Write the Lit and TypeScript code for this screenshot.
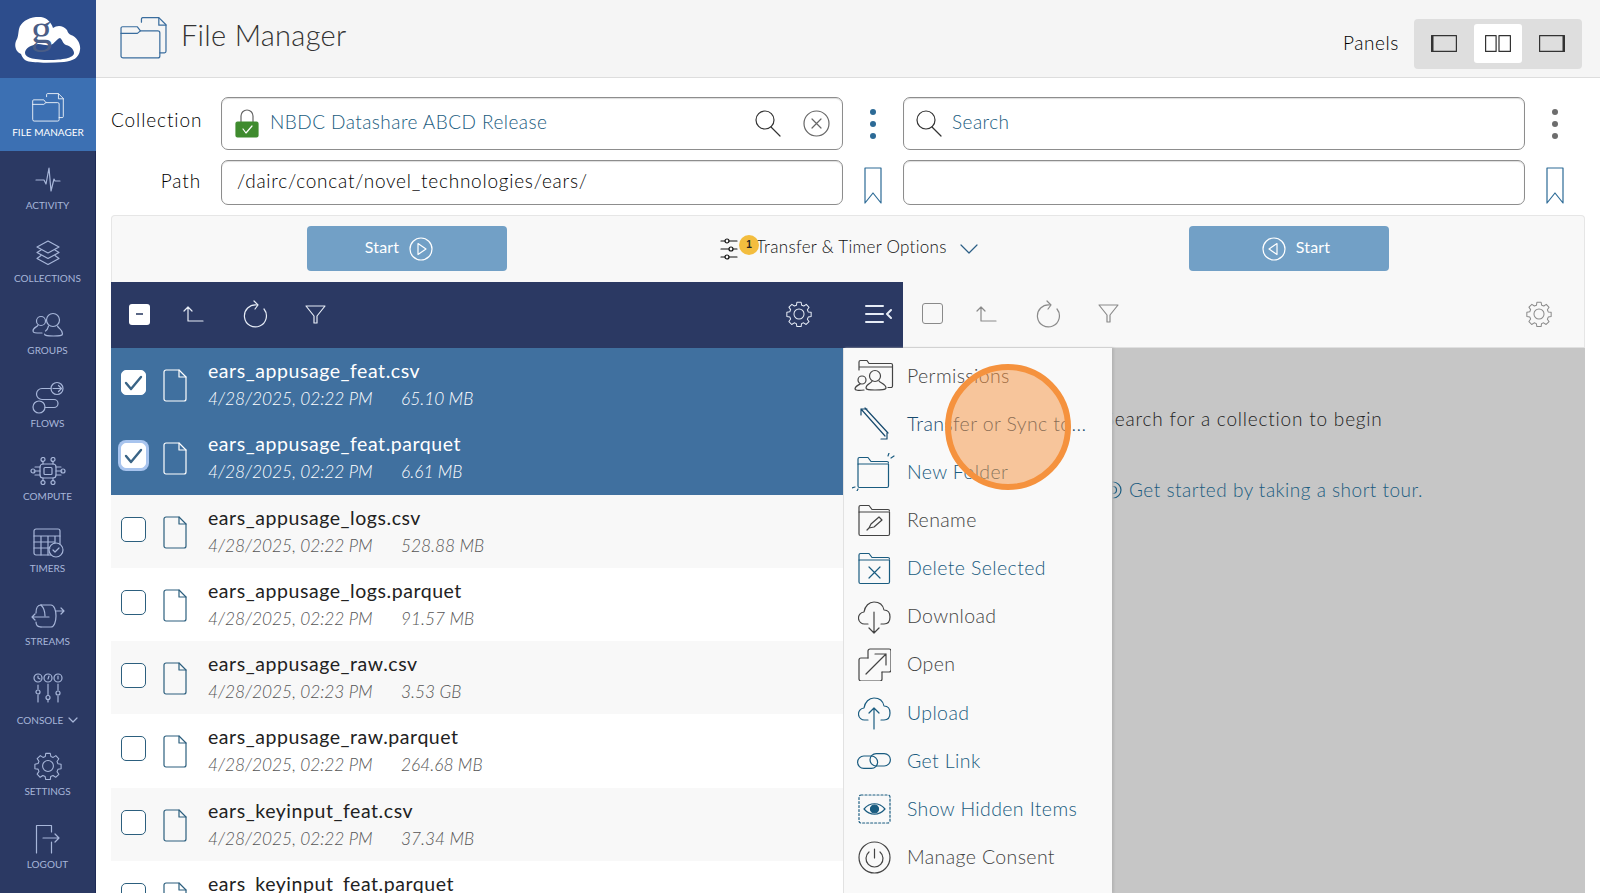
import { LitElement, html, css, svg } from "lit";
import { customElement } from "lit/decorators.js";

const ic = (w: number, h: number, cls: string, body: unknown, vb?: string) =>
  html`<svg class="i ${cls}" width=${w} height=${h} viewBox=${vb ?? `0 0 ${w} ${h}`} fill="none" stroke="currentColor" stroke-width="1.2" stroke-linecap="round" stroke-linejoin="round">${body}</svg>`;

const folderDoc = svg`<path d="M21 5V2a1.500 1.500 0 0 1 1.500-1.500H38l7 7v26a1.500 1.500 0 0 1-1.500 1.500H39"/><path d="M38 1v7h7"/><path d="M1 16V11a1.500 1.500 0 0 1 1.500-1.500H17l3 4h17a2 2 0 0 1 2 2V38a2 2 0 0 1-2 2H3a2 2 0 0 1-2-2z"/><path d="M1 16h16l3-2.500"/>`;
const gearPath = svg`<circle cx="14" cy="15.500" r="6"/><path d="M11.500 1.500h5l.7 3.500 2.500 1 3-2 3.300 3.500-2 3 1 2.500 3.500.5v5l-3.500.7-1 2.500 2 3-3.500 3.300-3-2-2.500 1-.5 3.500h-5l-.7-3.500-2.500-1-3 2-3.300-3.500 2-3-1-2.500-3.500-.5v-5l3.500-.7 1-2.500-2-3 3.500-3.300 3 2 2.500-1z"/>`;

const navIcons: Record<string, unknown> = {
  files: ic(32, 29, "", folderDoc, "0 0 46 41"),
  activity: ic(26, 26, "", svg`<path d="M1 13h8l2 4 3-16 2 23 3-12 1 2h5"/>`),
  collections: ic(26, 26, "", svg`<path d="M13 1l11 6-11 6L2 7z"/><path d="M6 10l-4 2.500 11 6 11-6-4-2.500"/><path d="M6 15.500l-4 3 11 6 11-6-4-3"/>`),
  groups: ic(32, 26, "", svg`<circle cx="21" cy="8" r="6.500"/><path d="M16.500 14c-1 2 0 3-3 5M25.500 14c1 3 5 3 5 8 0 2-3 2-9 2s-9 0-9-2"/><circle cx="9" cy="9" r="4.500"/><path d="M6 13c0 2-5 2-5 6 0 2 2 2 9 2"/>`),
  flows: ic(32, 34, "", svg`<circle cx="25" cy="7.500" r="6"/><path d="M21 7.500h8M26.500 4.500l3 3-3 3"/><path d="M19 7.500h-9a5 5 0 0 0 0 11h12a4 4 0 0 1 0 8h-9"/><circle cx="7" cy="26" r="6"/>`),
  compute: ic(36, 28, "", svg`<rect x="10" y="7" width="16" height="14" rx="3"/><rect x="14" y="10.500" width="8" height="7" rx="1"/><path d="M10 10H5M10 14H4M10 18H5M26 10h5M26 14h6M26 18h5M13 7V4M23 7V4M13 21v3M23 21v3"/><circle cx="13" cy="2.500" r="2"/><circle cx="23" cy="2.500" r="2"/><circle cx="13" cy="25.500" r="2"/><circle cx="23" cy="25.500" r="2"/><circle cx="3" cy="14" r="2"/><circle cx="33" cy="14" r="2"/>`),
  timers: ic(32, 30, "", svg`<path d="M19 27H4a2 2 0 0 1-2-2V3a2 2 0 0 1 2-2h22a2 2 0 0 1 2 2v13"/><path d="M2 8h26M2 14h20M2 20h16M9 8v19M16 8v19M23 8v7"/><circle cx="24" cy="22" r="7"/><path d="M21 22l2 2 4-4"/>`),
  streams: ic(34, 26, "", svg`<path d="M10 2h10c3 0 5 5 5 11s-2 11-5 11H10"/><path d="M10 2c-3 0-5 3-5 8M10 24c-3 0-5-2-5-5"/><path d="M10 2c2 2 4 6 4 11"/><path d="M25 8h8M30 5l3 3-3 3M18 14H1M4 11l-3 3 3 3"/>`),
  console: ic(32, 30, "", svg`<circle cx="6" cy="5" r="4"/><circle cx="16" cy="5" r="4"/><circle cx="26" cy="5" r="4"/><path d="M6 3v2l2 1M16 6l1-3M26 3v3"/><path d="M6 12v4M6 22v7M16 11v11M16 27v2M26 11v6M26 23v6"/><circle cx="6" cy="19" r="2"/><circle cx="16" cy="24.500" r="2"/><circle cx="26" cy="20" r="2"/>`),
  settings: ic(28, 28, "", gearPath, "0 0 28 31"),
  logout: ic(26, 30, "", svg`<path d="M1.500 29V1.500h15V8M16.500 18v11"/><path d="M8 14h16M20 10l4 4-4 4"/>`),
};

const gear = () => ic(26, 26, "", gearPath, "0 0 28 31");
const upIcon = ic(22, 18, "", svg`<path d="M6 16V2M2 6l4-4 4 4M6 16h15"/>`);
const refresh = ic(25, 28, "", svg`<path d="M14 5A11 11 0 1 0 21 9"/><path d="M11 1l4 4-3 4"/>`);
const filter = ic(21, 19, "", svg`<path d="M1 1h19l-8 10v7h-3v-7z"/>`);
const search = ic(27, 27, "", svg`<circle cx="11" cy="10" r="9"/><path d="M17 17l9 9"/>`);
const bookmark = ic(18, 37, "", svg`<path d="M1 1h16v35l-8-10-8 10z"/>`);
const kebab = html`<div class="kebab"><span></span><span></span><span></span></div>`;
const fileIcon = ic(24, 33, "", svg`<path d="M3 1h13l7 7v22a2 2 0 0 1-2 2H3a2 2 0 0 1-2-2V3a2 2 0 0 1 2-2z"/><path d="M16 1v7h7"/>`);

const files = [
  ["ears_appusage_feat.csv", "4/28/2025, 02:22 PM", "65.10 MB", "sel"],
  ["ears_appusage_feat.parquet", "4/28/2025, 02:22 PM", "6.61 MB", "sel focus"],
  ["ears_appusage_logs.csv", "4/28/2025, 02:22 PM", "528.88 MB", "alt"],
  ["ears_appusage_logs.parquet", "4/28/2025, 02:22 PM", "91.57 MB", ""],
  ["ears_appusage_raw.csv", "4/28/2025, 02:23 PM", "3.53 GB", "alt"],
  ["ears_appusage_raw.parquet", "4/28/2025, 02:22 PM", "264.68 MB", ""],
  ["ears_keyinput_feat.csv", "4/28/2025, 02:22 PM", "37.34 MB", "alt"],
  ["ears_keyinput_feat.parquet", "", "", ""],
];

const folder = svg`<path d="M1 8V3a1.500 1.500 0 0 1 1.500-1.500H11l3 4h16a1.500 1.500 0 0 1 1.500 1.500"/><path d="M1 8h30.500v22a1.500 1.500 0 0 1-1.500 1.500H2.500A1.500 1.500 0 0 1 1 30z"/>`;
const menuIcons: unknown[] = [
  ic(42, 36, "", svg`<path d="M6 12V4a1.500 1.500 0 0 1 1.500-1.500H14l2 3h22a1.500 1.500 0 0 1 1.500 1.500v21a1.500 1.500 0 0 1-1.500 1.500h-3M6 9h33"/><circle cx="22" cy="18" r="5.500"/><path d="M19 23c0 2-6 3-6 7 0 2 3 2 9 2s11 0 11-2c0-4-6-5-7-7"/><circle cx="9" cy="22" r="4"/><path d="M7 26c-1 1-5 2-5 5 0 1 3 2 9 1"/>`),
  ic(30, 34, "", svg`<path d="M2 2l24 27M2 2v6M2 2h6M28 32v-6M28 32h-6"/><path d="M6 1l23 25"/>`),
  ic(44, 38, "", svg`<g transform="translate(5 3)">${folder}</g><path d="M36 3l1-3M39 5l3-2M3 34l-3 1M6 36l-1 2"/>`),
  ic(33, 33, "", svg`${folder}<path d="M11 24l2-4 8-7 3 3-8 7zM9 26l2-2"/>`),
  ic(33, 33, "", svg`${folder}<path d="M11 15l11 11M22 15L11 26"/>`),
  ic(33, 34, "", svg`<path d="M10 24H7a6 6 0 0 1-1-12c1-6 5-10 10-10 5 0 9 3 10 8 4 0 6 3 6 7s-2 7-6 7h-3M16 12v21M11 28l5 5 5-5"/>`),
  ic(33, 33, "", svg`<path d="M10 10V3a2 2 0 0 1 2-2h19a2 2 0 0 1 2 2v19a2 2 0 0 1-2 2h-7"/><path d="M24 24v7a2 2 0 0 1-2 2H3a2 2 0 0 1-2-2V12a2 2 0 0 1 2-2h7M8 26L28 6M17 6h11v11"/>`),
  ic(33, 34, "", svg`<path d="M10 24H7a6 6 0 0 1-1-12c1-6 5-10 10-10 5 0 9 3 10 8 4 0 6 3 6 7s-2 7-6 7h-3M16 33V12M11 17l5-5 5 5"/>`),
  ic(34, 16, "", svg`<rect x=".6" y="3" width="20" height="12.400" rx="6.200"/><rect x="13" y=".6" width="20.400" height="12.400" rx="6.200"/>`),
  ic(33, 30, "", svg`<rect x="1" y="1" width="31" height="28" rx="2" stroke-dasharray="2 2"/><path d="M6 15c6-7 15-7 21 0-6 7-15 7-21 0z"/><circle cx="16.500" cy="15" r="4" fill="currentColor"/>`),
  ic(33, 33, "", svg`<circle cx="16.500" cy="16.500" r="15.500"/><path d="M16.500 8v9M11 11a8.500 8.500 0 1 0 11 0"/>`),
];
const menu: [string, string][] = [
  ["Permissions", "off"], ["Transfer or Sync to...", "dark"], ["New Folder", "on"], ["Rename", "off"],
  ["Delete Selected", "on"], ["Download", "off"], ["Open", "off"], ["Upload", "on"],
  ["Get Link", "on"], ["Show Hidden Items", "on"], ["Manage Consent", "off"],
];
const nav: [string, string, string][] = [
  ["files", "File Manager", "active"], ["activity", "Activity", ""], ["collections", "Collections", ""],
  ["groups", "Groups", ""], ["flows", "Flows", ""], ["compute", "Compute", ""], ["timers", "Timers", ""],
  ["streams", "Streams", ""], ["console", "Console", "tall"], ["settings", "Settings", ""], ["logout", "Logout", ""],
];

@customElement("app-root")
export class AppRoot extends LitElement {
  static styles = css`
    :host { display: block; height: 893px; overflow: hidden; font-family: Lato, "Open Sans", sans-serif; color: #222; position: relative; background: #fff; }
    * { box-sizing: border-box; }
    .i { display: block; flex: none; }
    .app { display: flex; height: 893px; }
    .side { width: 96px; flex: none; background: #2b3963; color: #a7b6d9; border-right: 1px solid #1d2a55; }
    .logo { height: 78px; background: #2d4d8c; margin-right: -1px; display: flex; align-items: center; justify-content: center; }
    .logo-wrap { position: relative; width: 66px; height: 46px; margin-top: 2px; }
    .logo-g { position: absolute; left: 16px; top: -10px; font: 400 42px/44px "Liberation Serif", serif; color: #4a5d86; }
    .nav { height: 72.7px; display: flex; flex-direction: column; align-items: center; padding-top: 11px; }
    .nav .ico { height: 36px; display: flex; align-items: center; justify-content: center; }
    .nav .lbl { font-size: 10px; line-height: 12px; margin-top: 1px; text-transform: uppercase; white-space: nowrap; display: flex; align-items: center; gap: 5px; }
    .nav.active { background: #3c70b3; color: #fff; height: 73px; margin-right: -1px; }
    .nav.tall { height: 77px; padding-top: 10px; }
    .nav.tall .lbl { margin-top: 8px; }
    main { flex: 1; min-width: 0; display: flex; flex-direction: column; }
    header { height: 78px; background: #f5f5f5; border-bottom: 1px solid #ddd; display: flex; align-items: center; padding: 0 18px 0 24px; color: #3a6d9e; flex: none; }
    header > .i { margin-bottom: 1px; }
    h1 { font-weight: 300; font-size: 29px; letter-spacing: .3px; color: #333; margin: 0 0 8px 14px; }
    .panels { margin: 8px 15px 0 auto; color: #000; font-size: 19px; font-weight: 300; letter-spacing: .6px; }
    .pgroup { width: 168px; height: 50px; margin-top: 10px; background: #dedede; border-radius: 4px; display: flex; align-items: center; justify-content: center; gap: 6px; color: #333; }
    .pbtn { width: 48px; height: 39px; display: flex; align-items: center; justify-content: center; border-radius: 3px; }
    .pbtn.on { background: #fff; }
    .top { padding: 19px 15px 10px; display: grid; grid-template-columns: 110px 622px 60px 622px 60px; row-gap: 10px; flex: none; }
    .flabel { text-align: right; padding-right: 20px; font-size: 19px; letter-spacing: .9px; color: #000; font-weight: 300; white-space: nowrap; }
    .flabel.c { padding-top: 11px; } .flabel.p { padding-top: 9px; }
    .box { border: 1px solid #8d8d8d; border-radius: 7px; background: #fff; display: flex; align-items: center; font-size: 19px; font-weight: 300; box-shadow: inset 0 1px 1px #ddd; }
    .box.c { height: 53px; padding: 0 12px 0 13px; gap: 11px; color: #1a5c80; letter-spacing: .45px; }
    .box.s { padding-left: 11px; gap: 10px; }
    .box.p { height: 45px; padding: 0 15px 4px; color: #000; letter-spacing: .76px; }
    .box .tx { padding-bottom: 5px; }
    .box .sp { flex: 1; }
    .sico { color: #333; } .xico { color: #666; margin-left: 11px; }
    .slot { display: flex; justify-content: center; color: #2c6a96; }
    .slot.g { color: #6d6d6d; }
    .slot.k { padding-top: 12px; } .slot.b { padding-top: 7px; }
    .kebab { display: flex; flex-direction: column; gap: 6px; }
    .kebab span { width: 6px; height: 6px; border-radius: 50%; background: currentColor; }
    .opts { margin: 0 15px; height: 67px; flex: none; background: #f8f8f8; border: 1px solid #e6e6e6; border-bottom: none; border-radius: 4px 4px 0 0; display: flex; align-items: flex-start; padding: 10px 0 0 195px; }
    .start { width: 200px; height: 45px; background: #72a0c6; border-radius: 4px; color: #fff; display: flex; align-items: center; justify-content: center; gap: 10px; font-size: 16px; flex: none; }
    .start .tx { padding-bottom: 4px; letter-spacing: .2px; }
    .start.a { padding-right: 16px; } .start.b { padding-left: 14px; }
    .opt { position: relative; width: 682px; height: 45px; display: flex; align-items: center; padding-left: 213px; font-size: 17px; font-weight: 300; color: #111; }
    .opt .t { margin: 0 0 4px 18px; letter-spacing: .3px; }
    .opt .chev { margin-left: 13px; color: #2c5f86; }
    .badge { position: absolute; left: 232px; top: 9px; width: 20px; height: 20px; border-radius: 50%; background: #f3bd3e; font: bold 10px/19px "Liberation Sans", sans-serif; text-align: center; color: #222; }
    .tools { margin: 0 15px; height: 66px; flex: none; display: flex; }
    .bar { display: flex; align-items: center; padding-bottom: 2px; }
    .bar.l { width: 792px; background: #2b3963; color: #e6ecf6; padding-left: 18px; padding-right: 11px; }
    .bar.r { flex: 1; background: #f8f8f8; color: #8a8a8a; padding-left: 19px; padding-right: 32px; border-right: 1px solid #e6e6e6; border-bottom: 1px solid #e0e0e0; }
    .bar .cb { width: 21px; height: 21px; border-radius: 3px; display: flex; align-items: center; justify-content: center; }
    .bar.l .cb { background: #fff; }
    .bar.l .cb::after { content: ""; width: 7px; height: 1.500px; background: #5a6785; }
    .bar.r .cb { border: 1px solid #8a8a8a; }
    .g1 { margin-left: 32px; } .g2 { margin-left: 39px; } .g3 { margin-left: 37px; } .ga { margin-left: auto; } .g4 { margin-left: 53px; }
    .body { margin: 0 15px; flex: 1; min-height: 0; display: flex; }
    .list { width: 732px; flex: none; }
    .row { height: 73.3px; padding: 10px 0 0 10px; display: grid; grid-template-columns: 24px 42px 1fr; color: #2c5f7e; }
    .row.sel { background: #40709f; color: #fff; }
    .row.alt { background: #f8f8f8; }
    .row .rcb { width: 25px; height: 25px; margin-top: 12px; border: 1.500px solid #2c5f7e; border-radius: 5px; display: flex; align-items: center; justify-content: center; background: #fff; color: #3a6486; }
    .row.sel .rcb { border-color: #fff; }
    .row.focus .rcb { box-shadow: 0 0 0 3px #a8c4ee; }
    .row .fi { padding: 11px 0 0 18px; }
    .row .txt { padding-left: 21px; }
    .name { font-size: 19.500px; line-height: 26px; letter-spacing: .56px; color: #222; white-space: nowrap; }
    .meta { margin-top: 1px; font-size: 17.300px; font-weight: 300; font-style: italic; line-height: 27px; color: #555; display: grid; grid-template-columns: 193px 1fr; white-space: nowrap; }
    .row.sel .name, .row.sel .meta { color: #fff; }
    .menu { width: 269px; flex: none; background: #f9f9f9; padding-top: 4px; border-left: 1px solid #e2e2e2; box-shadow: 2px 0 2px #b5b5b5; position: relative; z-index: 1; }
    .mi { height: 48.150px; display: flex; align-items: center; font-size: 19.500px; font-weight: 300; letter-spacing: .38px; white-space: nowrap; }
    .mi .mic { width: 63px; display: flex; justify-content: center; padding-right: 3px; flex: none; }
    .mi .tx { padding-bottom: 2px; }
    .mi.off { color: #444; } .mi.on { color: #1a5c80; } .mi.dark { color: #174a6e; }
    .gray { flex: 1; background: #c6c6c6; padding: 59px 0 0 0; color: #222; font-size: 19px; font-weight: 300; letter-spacing: .8px; margin-left: -8px; white-space: nowrap; }
    .gray .tour { margin-top: 48px; color: #1a5c80; display: flex; align-items: center; gap: 7px; letter-spacing: .5px; }
    .spot { position: absolute; left: 945px; top: 364px; width: 126px; height: 126px; border-radius: 50%; border: 6px solid #f5923e; background: rgba(245, 146, 62, .5); z-index: 3; }
  `;

  render() {
    return html`<div class="app">
      <nav class="side">
        <div class="logo"><div class="logo-wrap">
          <svg width="66" height="46" viewBox="0 0 66 46" fill="#fff"><path d="M6 37C1 35-1 29 1 24c2-3 2-6 3-12C6 4 16-1 26 0c6 1 10 5 12 11 4-3 10-3 14 2 1 3 2 4 4 5 6 2 10 9 9 15-1 8-7 11-16 12-14 1-30 1-37-1-3-1-5-4-6-7z"/><path d="M10 36c0-5 6-8 13-9 5 0 8 2 12 1 5-1 6-6 10-7 3 2 2 5 6 7 5 1 8 5 8 8 0 5-12 7-25 7s-24-2-24-7z" fill="#2d4d8c"/></svg>
          <span class="logo-g">g</span>
        </div></div>
        ${nav.map(([k, l, c]) => html`<div class="nav ${c}"><div class="ico">${navIcons[k]}</div><div class="lbl">${l}${k === "console" ? ic(10, 6, "", svg`<path d="M1 1l4 4 4-4"/>`) : ""}</div></div>`)}
      </nav>
      <main>
        <header>
          ${ic(47, 42, "", folderDoc, "0 0 46 41")}
          <h1>File Manager</h1>
          <span class="panels">Panels</span>
          <div class="pgroup">
            <div class="pbtn">${ic(26, 17, "", svg`<rect x=".6" y=".6" width="24.800" height="15.800"/><path d="M1.500 1v15" stroke-width="2"/>`)}</div>
            <div class="pbtn on">${ic(26, 17, "", svg`<rect x=".6" y=".6" width="10.500" height="15.800"/><rect x="14" y=".6" width="11.400" height="15.800"/>`)}</div>
            <div class="pbtn">${ic(26, 17, "", svg`<rect x=".6" y=".6" width="24.800" height="15.800"/><path d="M24.500 1v15" stroke-width="2"/>`)}</div>
          </div>
        </header>
        <section class="top">
          <div class="flabel c">Collection</div>
          <div class="box c">
            ${ic(24, 29, "", svg`<path d="M6 13V7a6 6 0 0 1 12 0v6" stroke="#666"/><rect x="1" y="13" width="22" height="15" rx="1.500" fill="#3f8b2e" stroke="#3f8b2e"/><path d="M8 20l3 4 6-7" stroke="#fff"/>`)}
            <span class="tx">NBDC Datashare ABCD Release</span><span class="sp"></span>
            <span class="sico">${search}</span>
            <span class="xico">${ic(27, 27, "", svg`<circle cx="13.500" cy="13.500" r="12.500"/><path d="M9 9l9 9M18 9l-9 9"/>`)}</span>
          </div>
          <div class="slot k">${kebab}</div>
          <div class="box c s"><span class="sico">${search}</span><span class="tx">Search</span></div>
          <div class="slot k g">${kebab}</div>
          <div class="flabel p">Path</div>
          <div class="box p">/dairc/concat/novel_technologies/ears/</div>
          <div class="slot b">${bookmark}</div>
          <div class="box p"></div>
          <div class="slot b">${bookmark}</div>
        </section>
        <section class="opts">
          <div class="start a"><span class="tx">Start</span> ${ic(24, 24, "", svg`<circle cx="12" cy="12" r="11"/><path d="M9 6.500l8 5.500-8 5.500z"/>`)}</div>
          <div class="opt">
            ${ic(18, 22, "", svg`<path d="M1 3h4M9 3h8M1 11h8M13 11h4M1 19h4M9 19h8"/><circle cx="7" cy="3" r="2"/><circle cx="11" cy="11" r="2"/><circle cx="7" cy="19" r="2"/>`)}
            <span class="badge">1</span>
            <span class="t">Transfer &amp; Timer Options</span>
            <span class="chev">${ic(18, 10, "", svg`<path d="M1 1l8 8 8-8"/>`)}</span>
          </div>
          <div class="start b">${ic(24, 24, "", svg`<circle cx="12" cy="12" r="11"/><path d="M15 6.500l-8 5.500 8 5.500z"/>`)} <span class="tx">Start</span></div>
        </section>
        <section class="tools">
          <div class="bar l">
            <div class="cb"></div>
            <span class="g1">${upIcon}</span><span class="g2">${refresh}</span><span class="g3">${filter}</span>
            <span class="ga">${gear()}</span>
            <span class="g4">${ic(27, 20, "", svg`<path d="M1 2h17M1 10h17M1 18h17" stroke-width="2"/><path d="M26 6l-4 4 4 4" stroke-width="2"/>`)}</span>
          </div>
          <div class="bar r">
            <div class="cb"></div>
            <span class="g1">${upIcon}</span><span class="g2">${refresh}</span><span class="g3">${filter}</span>
            <span class="ga">${gear()}</span>
          </div>
        </section>
        <section class="body">
          <div class="list">
            ${files.map(([n, d, s, c]) => html`<div class="row ${c}">
              <div class="rcb">${c.includes("sel") ? ic(19, 16, "", svg`<path d="M2 8l5 6L17 2" stroke-width="2.400"/>`) : ""}</div>
              <div class="fi">${fileIcon}</div>
              <div class="txt"><div class="name">${n}</div>${d ? html`<div class="meta"><span>${d}</span><span>${s}</span></div>` : ""}</div>
            </div>`)}
          </div>
          <div class="menu">
            ${menu.map(([t, c], i) => html`<div class="mi ${c}"><span class="mic">${menuIcons[i]}</span><span class="tx">${t}</span></div>`)}
          </div>
          <div class="gray">
            <div>Search for a collection to begin</div>
            <div class="tour">${ic(18, 18, "", svg`<circle cx="9" cy="9" r="8"/><circle cx="9" cy="9" r="3.500"/>`)}<span>Get started by taking a short tour.</span></div>
          </div>
        </section>
      </main>
    </div>
    <div class="spot"></div>`;
  }
}
